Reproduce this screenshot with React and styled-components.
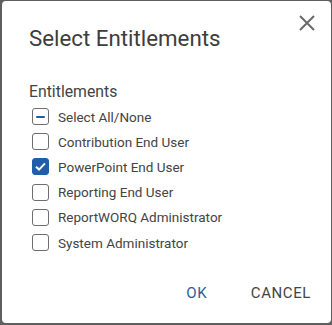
import React from "react";
import styled, { createGlobalStyle } from "styled-components";

const Global = createGlobalStyle`
  html, body { margin: 0; padding: 0; background: #5f5f5f; }
  body { font-family: Roboto, "Liberation Sans", sans-serif; }
`;

const Dialog = styled.div`
  box-sizing: border-box;
  margin: 1px 1px 2px 2px;
  width: 329px;
  height: 322px;
  background: #fff;
  border-radius: 4px;
  display: flex;
  flex-direction: column;
  position: relative;
`;

const Header = styled.div`
  padding: 22px 27px 0 27px;
  display: flex;
  justify-content: space-between;
`;

const Title = styled.h2`
  margin: 0;
  font-size: 22.3px;
  font-weight: 400;
  color: #3d3d3d;
  line-height: 30px;
`;

const Close = styled.button`
  position: absolute;
  top: 10px;
  right: 12px;
  width: 24px;
  height: 24px;
  border: 0;
  background: none;
  padding: 0;
  display: flex;
  align-items: center;
  justify-content: center;
`;

const Body = styled.div`
  padding: 29px 27px 0 27px;
  display: flex;
  flex-direction: column;
`;

const Legend = styled.div`
  font-size: 15.8px;
  color: #444;
  line-height: 20px;
  margin-bottom: 2px;
`;

const Row = styled.label`
  display: flex;
  align-items: center;
  height: 25.2px;
  gap: 9px;
  padding-left: 3px;
  font-size: 13.5px;
  color: #444;
`;

const Box = styled.span`
  box-sizing: border-box;
  width: 17px;
  height: 17px;
  border-radius: 3px;
  border: 1px solid ${(p) => (p.$checked ? "#1f5ea8" : "#6e6e6e")};
  background: ${(p) => (p.$checked ? "#1f5ea8" : "#fff")};
  display: flex;
  align-items: center;
  justify-content: center;
  flex: none;
`;

const Dash = styled.span`
  width: 9px;
  height: 2px;
  background: #1f5ea8;
  border-radius: 1px;
`;

const Footer = styled.div`
  margin-top: auto;
  display: flex;
  justify-content: flex-end;
  gap: 14px;
  padding: 0 12px 18px 0;
`;

const Btn = styled.button`
  border: 0;
  background: none;
  font-family: Roboto, "Liberation Sans", sans-serif;
  font-size: 15px;
  letter-spacing: 0.6px;
  text-transform: uppercase;
  color: ${(p) => (p.$primary ? "#2a5f98" : "#444")};
  padding: 0 8px;
  height: 24px;
  min-width: 64px;
`;

const items = [
  { label: "Select All/None", state: "mixed" },
  { label: "Contribution End User", state: false },
  { label: "PowerPoint End User", state: true },
  { label: "Reporting End User", state: false },
  { label: "ReportWORQ Administrator", state: false },
  { label: "System Administrator", state: false },
];

export default function App() {
  return (
    <>
      <Global />
      <Dialog>
        <Header>
          <Title>Select Entitlements</Title>
        </Header>
        <Close aria-label="close">
          <svg width="18" height="18" viewBox="0 0 18 18">
            <path d="M2 2 L16 16 M16 2 L2 16" stroke="#6a6a6a" strokeWidth="2" fill="none" />
          </svg>
        </Close>
        <Body>
          <Legend>Entitlements</Legend>
          {items.map((it) => (
            <Row key={it.label}>
              <Box $checked={it.state === true}>
                {it.state === "mixed" && <Dash />}
                {it.state === true && (
                  <svg width="13" height="13" viewBox="0 0 13 13">
                    <path d="M2 6.8 L5 9.6 L11 3.4" stroke="#fff" strokeWidth="2" fill="none" />
                  </svg>
                )}
              </Box>
              {it.label}
            </Row>
          ))}
        </Body>
        <Footer>
          <Btn $primary>OK</Btn>
          <Btn>Cancel</Btn>
        </Footer>
      </Dialog>
    </>
  );
}
